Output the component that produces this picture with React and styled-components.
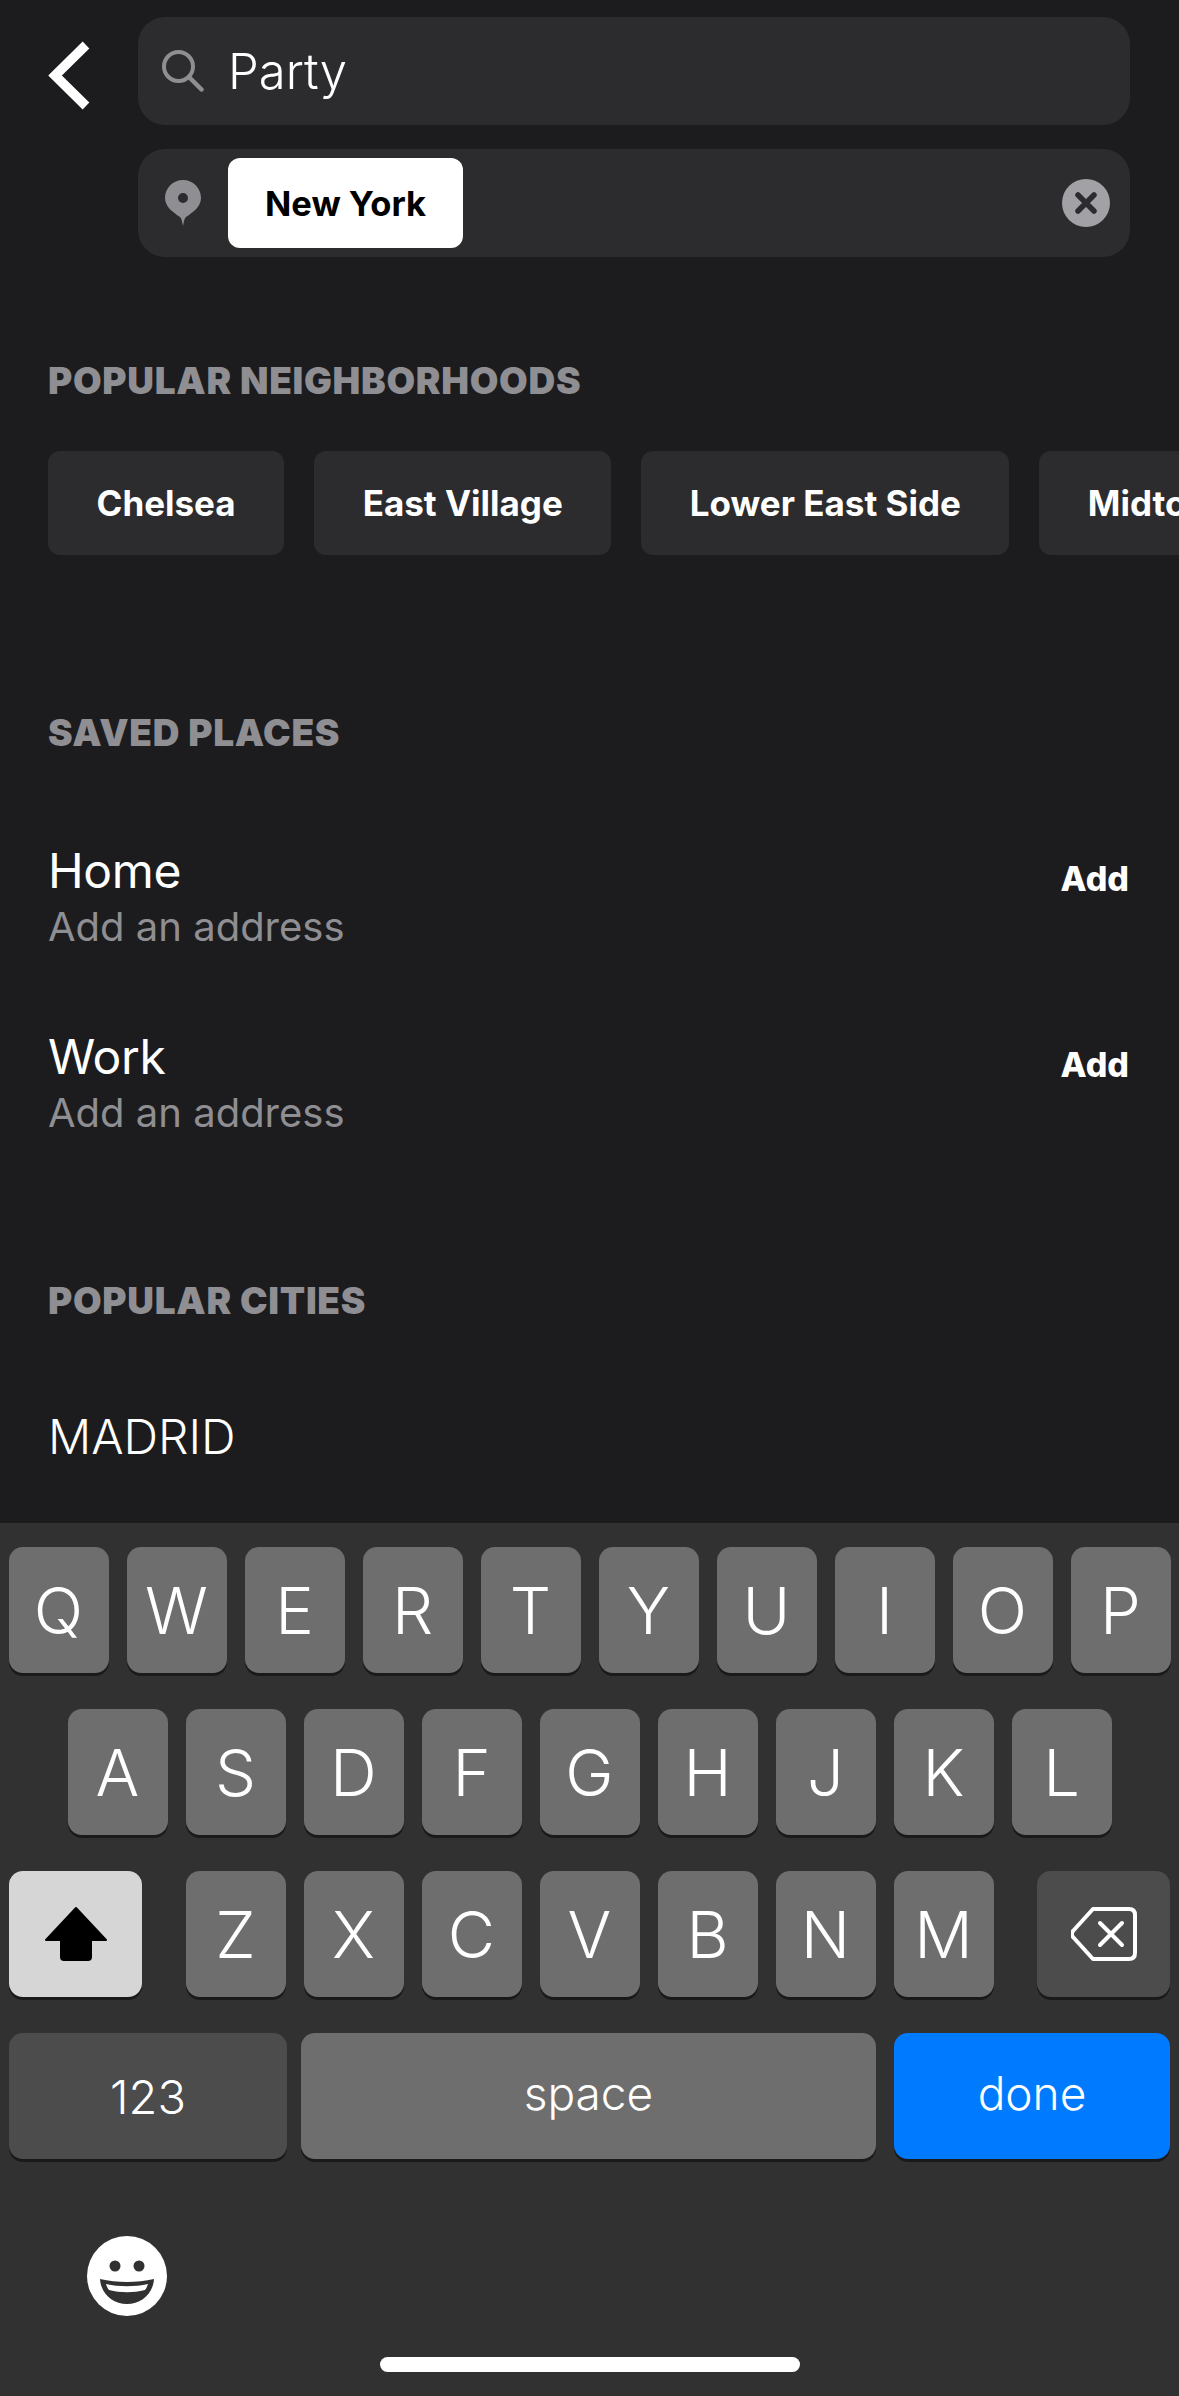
import React from "react";
import styled, { createGlobalStyle } from "styled-components";

const GlobalStyle = createGlobalStyle`
  html, body {
    margin: 0;
    padding: 0;
    background: #1c1c1e;
  }
  * {
    box-sizing: border-box;
  }
`;

const Screen = styled.div`
  width: 1179px;
  height: 2396px;
  display: flex;
  flex-direction: column;
  overflow: hidden;
  background: #1c1c1e;
  font-family: "Inter", "Liberation Sans", sans-serif;
  color: #ffffff;
`;

const Content = styled.div`
  height: 1523px;
  flex-shrink: 0;
  overflow: hidden;
`;

const SearchHeader = styled.div`
  display: flex;
  padding: 17px 49px 0 48px;
`;

const BackButton = styled.div`
  width: 90px;
  flex-shrink: 0;
  padding-top: 24px;
  svg {
    display: block;
  }
`;

const Fields = styled.div`
  flex: 1;
  display: flex;
  flex-direction: column;
  gap: 24px;
`;

const Field = styled.div`
  height: 108px;
  background: #2c2c2e;
  border-radius: 27px;
  display: flex;
  align-items: center;
  padding: 0 20px 0 24px;
`;

const SearchText = styled.span`
  margin-left: 24px;
  font-size: 49px;
  font-weight: 300;
  color: #ffffff;
`;

const PinIcon = styled.svg`
  margin-left: 3px;
  flex-shrink: 0;
`;

const CityChip = styled.div`
  height: 90px;
  margin-left: 27px;
  padding: 0 37px;
  background: #ffffff;
  border-radius: 12px;
  color: #000000;
  font-size: 34.5px;
  font-weight: 700;
  display: flex;
  align-items: center;
`;

const ClearButton = styled.div`
  margin-left: auto;
  display: flex;
`;

const SectionTitle = styled.h2`
  margin: ${(p) => p.$top}px 0 0 48px;
  font-size: 37px;
  line-height: 42px;
  font-weight: 900;
  color: #8e8e93;
  letter-spacing: 0.7px;
  white-space: nowrap;
`;

const ChipRow = styled.div`
  display: flex;
  gap: 30px;
  margin-top: 49px;
  padding-left: 48px;
`;

const PlaceChip = styled.div`
  flex-shrink: 0;
  height: 104px;
  padding: 0 48.5px;
  background: #2c2c2e;
  border-radius: 12px;
  font-size: 35px;
  font-weight: 700;
  display: flex;
  align-items: center;
`;

const SavedList = styled.div`
  margin-top: 85px;
  padding: 0 50px 0 48px;
  display: flex;
  flex-direction: column;
  gap: 73px;
`;

const SavedRow = styled.div`
  display: flex;
  align-items: flex-start;
  justify-content: space-between;
`;

const SavedTitle = styled.div`
  font-size: 48px;
  font-weight: 400;
  letter-spacing: -0.3px;
  line-height: 63px;
`;

const SavedSub = styled.div`
  font-size: 40px;
  font-weight: 400;
  line-height: 50px;
  color: #8e8e93;
`;

const AddLink = styled.div`
  margin-top: 18px;
  font-size: 34px;
  line-height: 44px;
  font-weight: 800;
`;

const CityName = styled.div`
  margin: 83px 0 0 48px;
  font-size: 48px;
  font-weight: 300;
  line-height: 64px;
`;

const Keyboard = styled.div`
  flex: 1;
  background: #313131;
  padding: 24px 9px 0;
  display: flex;
  flex-direction: column;
  gap: 36px;
`;

const KeyRow = styled.div`
  display: flex;
  justify-content: ${(p) => (p.$spread ? "space-between" : "center")};
  gap: 18px;
`;

const LetterGroup = styled.div`
  display: flex;
  gap: 18px;
`;

const Key = styled.div`
  width: ${(p) => p.$width || 100}px;
  flex: none;
  height: 126px;
  border-radius: 14px;
  background: ${(p) => p.$bg || "#6e6e6e"};
  box-shadow: 0 3px 0 #1a1a1a;
  color: #ffffff;
  font-size: ${(p) => p.$size || 65}px;
  font-weight: 300;
  display: flex;
  align-items: center;
  justify-content: center;
`;

const WordKey = styled(Key)`
  padding-bottom: 6px;
`;

const SpaceKey = styled(WordKey)`
  flex: 1;
  margin-left: -4px;
`;

const KeyboardFooter = styled.div`
  flex: 1;
  display: flex;
  flex-direction: column;
  padding: 41px 0 24px;
  justify-content: space-between;
`;

const EmojiIcon = styled.svg`
  margin-left: 78px;
`;

const HomeBar = styled.div`
  width: 420px;
  height: 15px;
  align-self: center;
  border-radius: 8px;
  background: #ffffff;
`;

const ROW_ONE = ["Q", "W", "E", "R", "T", "Y", "U", "I", "O", "P"];
const ROW_TWO = ["A", "S", "D", "F", "G", "H", "J", "K", "L"];
const ROW_THREE = ["Z", "X", "C", "V", "B", "N", "M"];
const NEIGHBORHOODS = ["Chelsea", "East Village", "Lower East Side", "Midtown"];

function SavedPlace({ title }) {
  return (
    <SavedRow>
      <div>
        <SavedTitle>{title}</SavedTitle>
        <SavedSub>Add an address</SavedSub>
      </div>
      <AddLink>Add</AddLink>
    </SavedRow>
  );
}

export default function App() {
  return (
    <Screen>
      <GlobalStyle />
      <Content>
        <SearchHeader>
          <BackButton>
            <svg width="42" height="69" viewBox="0 0 42 69">
              <path d="M38 4 L7 34.5 L38 65" fill="none" stroke="#fff" strokeWidth="9.500" />
            </svg>
          </BackButton>
          <Fields>
            <Field>
              <svg width="42" height="42" viewBox="0 0 42 42">
                <circle cx="16.500" cy="16.500" r="14.500" fill="none" stroke="#8e8e93" strokeWidth="4" />
                <path d="M27 27 L39.500 39.500" stroke="#8e8e93" strokeWidth="4.500" strokeLinecap="round" />
              </svg>
              <SearchText>Party</SearchText>
            </Field>
            <Field>
              <PinIcon width="36" height="46" viewBox="0 0 36 46">
                <path
                  fillRule="evenodd"
                  d="M18 0 C8 0 0 8 0 18 C0 27 9 33 15 37 C16.500 38 17 41 18 46 C19 41 19.500 38 21 37 C27 33 36 27 36 18 C36 8 28 0 18 0 Z M18 13 A5 5 0 1 1 18 23 A5 5 0 1 1 18 13 Z"
                  fill="#8e8e93"
                />
              </PinIcon>
              <CityChip>New York</CityChip>
              <ClearButton>
                <svg width="48" height="48" viewBox="0 0 48 48">
                  <circle cx="24" cy="24" r="24" fill="#a1a1a6" />
                  <path d="M16 16 L32 32 M32 16 L16 32" stroke="#2c2c2e" strokeWidth="5.500" strokeLinecap="round" />
                </svg>
              </ClearButton>
            </Field>
          </Fields>
        </SearchHeader>

        <SectionTitle $top={103}>POPULAR NEIGHBORHOODS</SectionTitle>
        <ChipRow>
          {NEIGHBORHOODS.map((name) => (
            <PlaceChip key={name}>{name}</PlaceChip>
          ))}
        </ChipRow>

        <SectionTitle $top={157}>SAVED PLACES</SectionTitle>
        <SavedList>
          <SavedPlace title="Home" />
          <SavedPlace title="Work" />
        </SavedList>

        <SectionTitle $top={142}>POPULAR CITIES</SectionTitle>
        <CityName>MADRID</CityName>
      </Content>

      <Keyboard>
        <KeyRow>
          {ROW_ONE.map((letter) => (
            <Key key={letter}>{letter}</Key>
          ))}
        </KeyRow>
        <KeyRow>
          {ROW_TWO.map((letter) => (
            <Key key={letter}>{letter}</Key>
          ))}
        </KeyRow>
        <KeyRow $spread>
          <Key $width={133} $bg="#d6d6d6">
            <svg width="64" height="56" viewBox="0 0 64 56">
              <path
                d="M32 2 L62 34 H47 V51 C47 53 46 54 44 54 H20 C18 54 17 53 17 51 V34 H2 Z"
                fill="#000"
                stroke="#000"
                strokeWidth="2"
                strokeLinejoin="round"
              />
            </svg>
          </Key>
          <LetterGroup>
            {ROW_THREE.map((letter) => (
              <Key key={letter}>{letter}</Key>
            ))}
          </LetterGroup>
          <Key $width={133} $bg="#4c4c4c">
            <svg width="66" height="54" viewBox="0 0 66 54">
              <path
                d="M22 2 H58 C62 2 64 4 64 8 V46 C64 50 62 52 58 52 H22 L2 30 C0.500 28 0.500 26 2 24 Z"
                fill="none"
                stroke="#fff"
                strokeWidth="4"
                strokeLinejoin="round"
              />
              <path d="M29 16 L51 38 M51 16 L29 38" stroke="#fff" strokeWidth="4" strokeLinecap="round" />
            </svg>
          </Key>
        </KeyRow>
        <KeyRow>
          <Key $width={278} $bg="#4c4c4c" $size={47}>123</Key>
          <SpaceKey $size={46}>space</SpaceKey>
          <WordKey $width={276} $bg="#007aff" $size={46}>done</WordKey>
        </KeyRow>
        <KeyboardFooter>
          <EmojiIcon width="80" height="80" viewBox="0 0 80 80">
            <circle cx="40" cy="40" r="40" fill="#fff" />
            <circle cx="28" cy="30" r="5.500" fill="#313131" />
            <circle cx="52" cy="30" r="5.500" fill="#313131" />
            <path d="M13 43 C30 47 50 47 67 43 C66 58 54 68 40 68 C26 68 14 58 13 43 Z" fill="#313131" />
            <path d="M19 48 C32 51 48 51 61 48 C60 51 59 53 58 54 C46 57 34 57 22 54 C21 53 20 51 19 48 Z" fill="#fff" />
          </EmojiIcon>
          <HomeBar />
        </KeyboardFooter>
      </Keyboard>
    </Screen>
  );
}
